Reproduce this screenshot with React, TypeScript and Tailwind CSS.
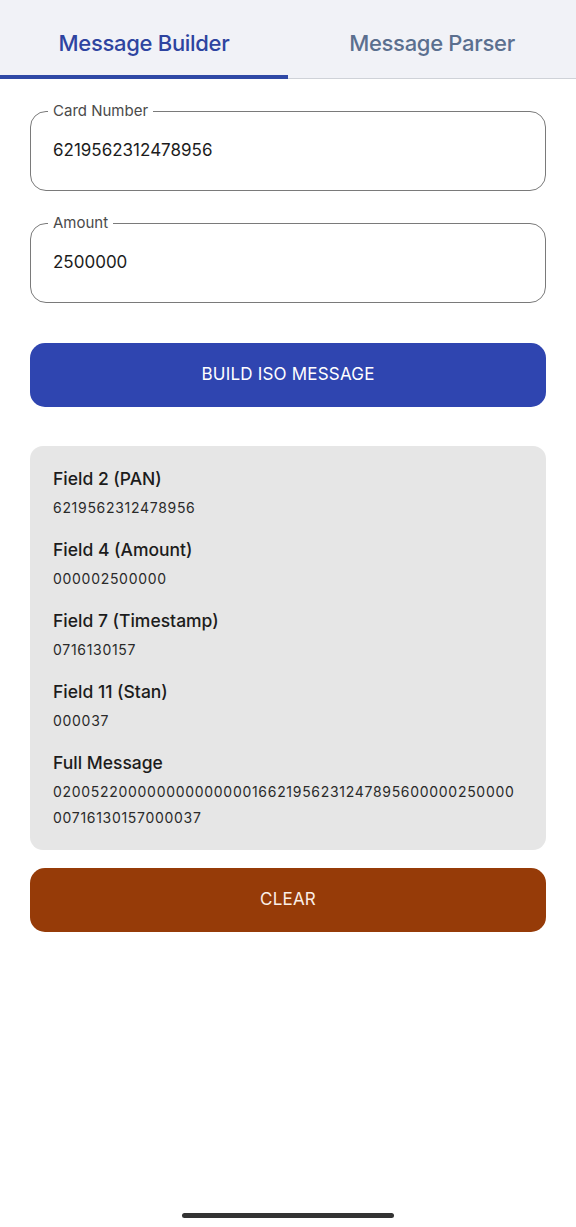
import React from "react";

function Field({ label, value, top }: { label: string; value: string; top?: string }) {
  return (
    <div className={`relative h-[80px] rounded-[16px] border-[1.5px] border-[#7a7a7a] ${top ?? ""}`}>
      <span className="absolute left-[17px] top-[-11px] bg-white px-[5px] text-[15px] leading-[20px] text-[#4a4a4a]">
        {label}
      </span>
      <div className="flex h-full items-center pl-[22px] text-[17px] tracking-[0px] text-[#1c1c1c] [font-variant-numeric:proportional-nums]">
        {value}
      </div>
    </div>
  );
}

function Row({ title, value }: { title: string; value: React.ReactNode }) {
  return (
    <div className="flex flex-col">
      <div className="text-[17.5px] font-medium leading-[24px] tracking-[0px] text-[#1c1c1c]">{title}</div>
      <div className="mt-[4px] text-[14px] leading-[26px] tracking-[0.7px] text-[#2a2a2a] [font-variant-numeric:proportional-nums]">
        {value}
      </div>
    </div>
  );
}

export default function App() {
  return (
    <div
      className="relative flex h-[1227px] w-[576px] flex-col bg-white"
      style={{ fontFamily: "Inter, 'Noto Sans', sans-serif" }}
    >
      <div className="flex h-[79px] border-b border-[#cfd2d8] bg-[#f1f2f7]">
        <div className="relative flex flex-1 items-center justify-center pt-[8px]">
          <span className="text-[22px] font-medium tracking-[-0.3px] text-[#2e44a0]">Message Builder</span>
          <div className="absolute bottom-[-1px] left-0 right-0 h-[4px] bg-[#3049a6]" />
        </div>
        <div className="flex flex-1 items-center justify-center pt-[8px]">
          <span className="text-[22px] font-medium tracking-[-0.3px] text-[#5b6f8f]">Message Parser</span>
        </div>
      </div>

      <div className="flex flex-col px-[30px] pt-[32px]">
        <Field label="Card Number" value="6219562312478956" />
        <Field label="Amount" value="2500000" top="mt-[32px]" />

        <button className="mt-[40px] flex h-[64px] items-center justify-center rounded-[15px] bg-[#2f45b0] text-[17px] tracking-[0.2px] text-white">
          BUILD ISO MESSAGE
        </button>

        <div className="mt-[39px] flex flex-col gap-[17px] rounded-[13px] bg-[#e6e6e6] px-[23px] pb-[19px] pt-[21px]">
          <Row title="Field 2 (PAN)" value="6219562312478956" />
          <Row title="Field 4 (Amount)" value="000002500000" />
          <Row title="Field 7 (Timestamp)" value="0716130157" />
          <Row title="Field 11 (Stan)" value="000037" />
          <Row
            title="Full Message"
            value={
              <>
                02005220000000000000016621956231247895600000250000
                <br />
                00716130157000037
              </>
            }
          />
        </div>

        <button className="mt-[18px] flex h-[64px] items-center justify-center rounded-[15px] bg-[#963b08] text-[17px] tracking-[0.2px] text-[#fbeee6]">
          CLEAR
        </button>
      </div>

      <div className="absolute bottom-[9px] left-[182px] h-[5px] w-[212px] rounded-full bg-[#333333]" />
    </div>
  );
}
